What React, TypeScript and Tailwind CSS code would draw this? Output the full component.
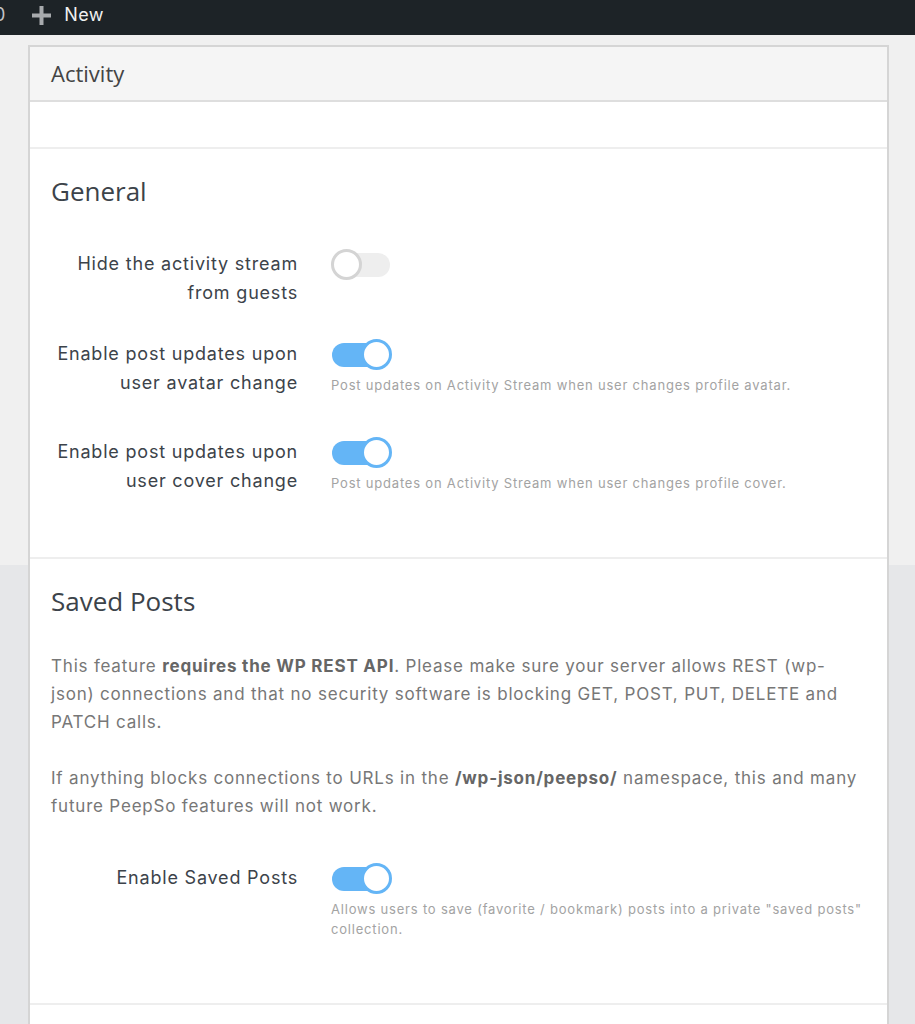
import React from "react";

function Toggle({ on }: { on: boolean }) {
  return (
    <div className="relative w-[61px] h-[31px] shrink-0">
      <div
        className={
          on
            ? "absolute left-[1px] top-[3.5px] w-[56px] h-[24px] rounded-full bg-[#64b5f6]"
            : "absolute left-[3px] top-[3.5px] w-[56px] h-[24px] rounded-full bg-[#eeeeee]"
        }
      />
      <div
        className={
          on
            ? "absolute right-0 top-0 w-[31px] h-[31px] rounded-full bg-white border-[3px] border-[#64b5f6]"
            : "absolute left-0 top-0 w-[31px] h-[31px] rounded-full bg-white border-[3px] border-[#d4d4d4]"
        }
      />
    </div>
  );
}

function Row({
  label,
  on,
  desc,
  className,
}: {
  label: React.ReactNode;
  on: boolean;
  desc?: React.ReactNode;
  className?: string;
}) {
  return (
    <div className={"flex items-start " + (className ?? "")}>
      <div className="w-[247px] shrink-0 text-right text-[18px] leading-[29px] tracking-[0.8px] text-[#3c434a]">
        {label}
      </div>
      <div className="ml-[33px] flex flex-col">
        <Toggle on={on} />
        {desc && (
          <div className="mt-[5px] text-[13px] leading-[20px] tracking-[0.8px] text-[#a3a3a3]">
            {desc}
          </div>
        )}
      </div>
    </div>
  );
}

export default function App() {
  return (
    <div
      className="w-[915px] min-h-[1024px] bg-[linear-gradient(to_bottom,#f0f0f0_565px,#e6e7e9_565px)] overflow-hidden"
      style={{ fontFamily: "Inter, 'Noto Sans', sans-serif" }}
    >
      <div className="h-[35px] pb-[6px] bg-[#1d2327] flex items-center">
        <span className="-ml-[6px] text-[18px] text-[#c3c4c7]">0</span>
        <svg
          className="ml-[27px] mt-[2px]"
          width="19"
          height="19"
          viewBox="0 0 19 19"
        >
          <rect x="7.5" y="0" width="4" height="19" fill="#a7aaad" />
          <rect x="0" y="7.5" width="19" height="4" fill="#a7aaad" />
        </svg>
        <span className="ml-[13px] text-[18px] tracking-[0.3px] text-[#f0f0f1]">New</span>
      </div>

      <div className="pt-[10px] pl-[28px] pr-[26px]">
        <div className="border-2 border-[#d5d5d5] bg-white">
          <div className="h-[55px] bg-[#f5f5f5] border-b-2 border-[#dedede] px-[21px] flex items-center">
            <span
              className="text-[22px] text-[#444]"
              style={{ fontFamily: "'Open Sans', sans-serif" }}
            >
              Activity
            </span>
          </div>
          <div className="h-[47px] border-b-2 border-[#eeeeee]" />

          <div className="px-[21px] pt-[27px] pb-[62px] border-b-2 border-[#eeeeee]">
            <h2
              className="text-[26px] leading-[30px] text-[#3c434a]"
              style={{ fontFamily: "'Open Sans', sans-serif" }}
            >
              General
            </h2>
            <Row
              className="mt-[43px]"
              label={
                <>
                  Hide the activity stream
                  <br />
                  from guests
                </>
              }
              on={false}
            />
            <Row
              className="mt-[32px]"
              label={
                <>
                  Enable post updates upon
                  <br />
                  user avatar change
                </>
              }
              on={true}
              desc="Post updates on Activity Stream when user changes profile avatar."
            />
            <Row
              className="mt-[40px]"
              label={
                <>
                  Enable post updates upon
                  <br />
                  user cover change
                </>
              }
              on={true}
              desc="Post updates on Activity Stream when user changes profile cover."
            />
          </div>

          <div className="px-[21px] pt-[27px] pb-[64px] border-b-2 border-[#eeeeee]">
            <h2
              className="text-[26px] leading-[30px] text-[#3c434a]"
              style={{ fontFamily: "'Open Sans', sans-serif" }}
            >
              Saved Posts
            </h2>
            <p className="mt-[36px] text-[17px] leading-[28px] tracking-[0.8px] text-[#777777]">
              This feature{" "}
              <b className="font-bold text-[#666666]">requires the WP REST API</b>
              . Please make sure your server allows REST (wp-json) connections and
              that no security software is blocking GET, POST, PUT, DELETE and
              PATCH calls.
            </p>
            <p className="mt-[28px] text-[17px] leading-[28px] tracking-[0.8px] text-[#777777]">
              If anything blocks connections to URLs in the{" "}
              <b className="font-bold text-[#666666]">/wp-json/peepso/</b>{" "}
              namespace, this and many future PeepSo features will not work.
            </p>
            <Row
              className="mt-[43px]"
              label="Enable Saved Posts"
              on={true}
              desc={
                <>
                  Allows users to save (favorite / bookmark) posts into a private
                  "saved posts" collection.
                </>
              }
            />
          </div>
          <div className="h-[40px]" />
        </div>
      </div>
    </div>
  );
}
